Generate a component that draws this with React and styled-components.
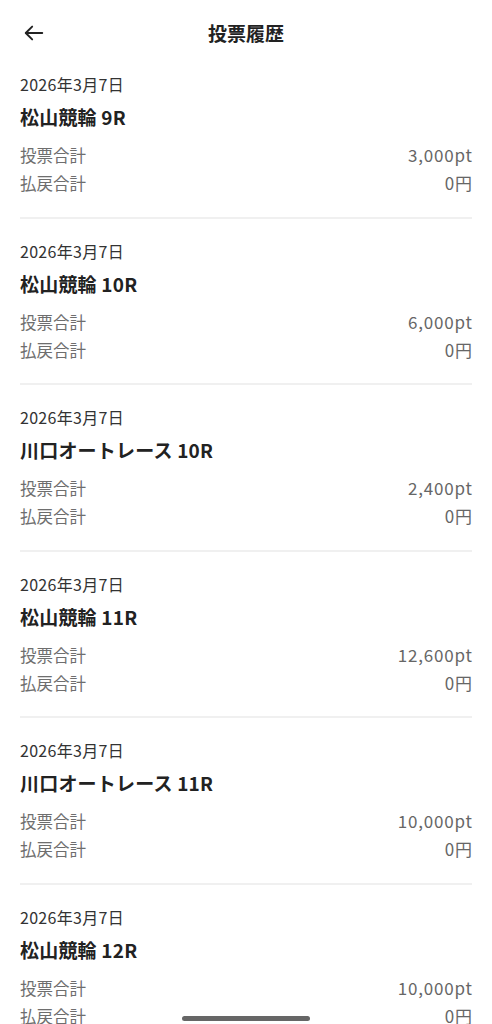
import React from "react";
import styled, { createGlobalStyle } from "styled-components";

const Global = createGlobalStyle`
  html, body { margin: 0; padding: 0; background: #fff; }
  body {
    font-family: "Noto Sans CJK JP", "Noto Sans", sans-serif;
    -webkit-font-smoothing: antialiased;
  }
`;

const Page = styled.div`
  width: 492px;
  min-height: 1024px;
  background: #fff;
`;

const Header = styled.header`
  height: 38px;
  padding-top: 14px;
  display: grid;
  grid-template-columns: 64px 1fr 64px;
  align-items: center;
`;

const BackButton = styled.button`
  border: none;
  background: none;
  padding: 0 0 0 23px;
  display: flex;
  align-items: center;
  color: #222;
  cursor: pointer;
`;

const Title = styled.h1`
  margin: 0;
  text-align: center;
  font-size: 19px;
  font-weight: 700;
  color: #222;
  line-height: 26px;
`;

const List = styled.ul`
  list-style: none;
  margin: 0;
  padding: 0 20px;
`;

const Item = styled.li`
  padding: 20px 0 21.5px;
  border-bottom: 2px solid #f0f0f0;
`;

const DateText = styled.div`
  font-size: 16px;
  line-height: 24px;
  letter-spacing: 0.3px;
  color: #333;
`;

const RaceName = styled.div`
  margin-top: 8px;
  font-size: 19px;
  font-weight: 700;
  line-height: 26px;
  letter-spacing: 0.2px;
  color: #222;
`;

const Rows = styled.div`
  margin-top: 13px;
  display: flex;
  flex-direction: column;
  gap: 4px;
`;

const Row = styled.div`
  display: flex;
  justify-content: space-between;
  align-items: center;
  line-height: 24px;
`;

const Label = styled.span`
  font-size: 16.5px;
  color: #6e6e6e;
`;

const Value = styled.span`
  font-size: 17px;
  letter-spacing: 0.8px;
  margin-right: -0.8px;
  color: #666;
`;

const HomeBar = styled.div`
  position: fixed;
  left: 182px;
  bottom: 3px;
  width: 128px;
  height: 5px;
  border-radius: 3px;
  background: #666;
`;

const items = [
  { race: "松山競輪 9R", bet: "3,000pt" },
  { race: "松山競輪 10R", bet: "6,000pt" },
  { race: "川口オートレース 10R", bet: "2,400pt" },
  { race: "松山競輪 11R", bet: "12,600pt" },
  { race: "川口オートレース 11R", bet: "10,000pt" },
  { race: "松山競輪 12R", bet: "10,000pt" },
];

export default function App() {
  return (
    <Page>
      <Global />
      <Header>
        <BackButton aria-label="戻る">
          <svg width="22" height="22" viewBox="0 0 24 24" fill="none" stroke="#222" strokeWidth="2.1" strokeLinecap="round" strokeLinejoin="round">
            <path d="M21 12H3.5" />
            <path d="M10 5l-7 7 7 7" />
          </svg>
        </BackButton>
        <Title>投票履歴</Title>
        <div />
      </Header>
      <List>
        {items.map((it, i) => (
          <Item key={i}>
            <DateText>2026年3月7日</DateText>
            <RaceName>{it.race}</RaceName>
            <Rows>
              <Row>
                <Label>投票合計</Label>
                <Value>{it.bet}</Value>
              </Row>
              <Row>
                <Label>払戻合計</Label>
                <Value>0円</Value>
              </Row>
            </Rows>
          </Item>
        ))}
      </List>
      <HomeBar />
    </Page>
  );
}
